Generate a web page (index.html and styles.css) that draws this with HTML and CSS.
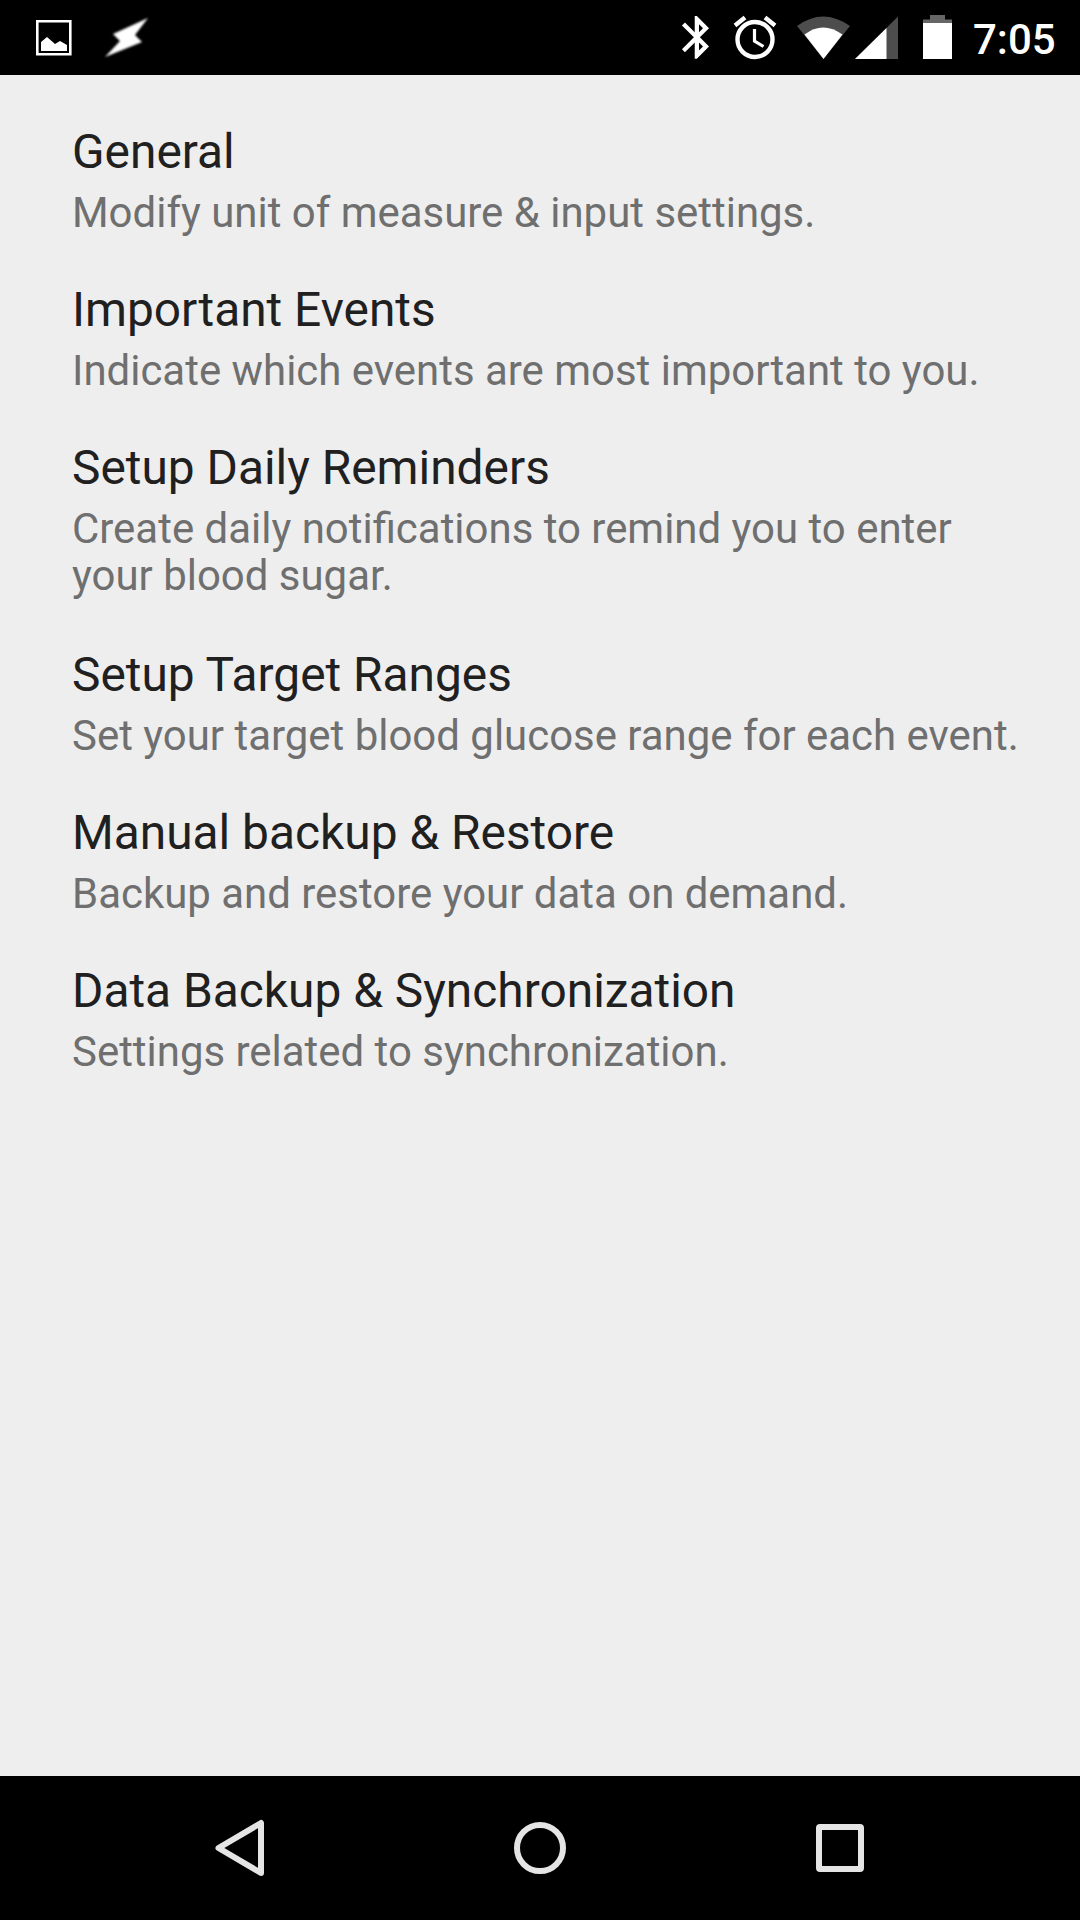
FILE: index.html
```html
<!DOCTYPE html>
<html lang="en">
<head>
<meta charset="utf-8">
<title>Settings</title>
<link rel="stylesheet" href="styles.css">
</head>
<body>
<header class="status">
  <svg class="status-left" width="160" height="75" viewBox="0 0 160 75">
    <path fill="none" stroke="#fff" stroke-width="2.600" d="M37.300 21.300h33v33h-33z"/>
    <path fill="#fff" d="M41 51V42l6-5 8 7 5-3 7 4v6z"/>
    <path class="bolt" fill="#fff" d="M148 18L113 34 120 41 105 57 142 42 135 35z"/>
  </svg>
  <svg class="status-right" width="290" height="75" viewBox="670 0 290 75">
    <path fill="#fff" transform="translate(671.300 11.800) scale(2.130)" d="M17.710 7.710L12 2h-1v7.590L6.410 5 5 6.410 10.590 12 5 17.590 6.410 19 11 14.410V22h1l5.710-5.710-4.300-4.290 4.300-4.290zM13 5.830l1.880 1.880L13 9.590V5.830zm1.880 10.460L13 18.170v-3.760l1.880 1.880z"/>
    <circle cx="755" cy="39.500" r="17.500" fill="none" stroke="#fff" stroke-width="4.400"/>
    <path fill="none" stroke="#fff" stroke-width="4.400" d="M735 25.500l10-8M775 25.500l-10-8"/>
    <path fill="none" stroke="#fff" stroke-width="3.200" d="M754.500 29v12l9 5.500"/>
    <path fill="#4d4d4d" d="M797 26Q823 7 850 26L823.500 59z"/>
    <path fill="#fff" d="M804.500 34.500Q823 20.500 842.500 34.500L823.500 59z"/>
    <path fill="#4d4d4d" d="M898 16.500V59h-43z"/><path fill="#fff" d="M886.500 28v31h-31.500z"/>
    <path fill="#666" d="M923 19.500h7v-4.500h15v4.500h7V24h-29z"/>
    <path fill="#fff" d="M923 23h29v36h-29z"/>
  </svg>
  <time class="clock">7:05</time>
</header>
<main class="settings">
  <section class="item"><h2>General</h2><p>Modify unit of measure &amp; input settings.</p></section>
  <section class="item"><h2>Important Events</h2><p>Indicate which events are most important to you.</p></section>
  <section class="item"><h2>Setup Daily Reminders</h2><p>Create daily notifications to remind you to enter<br>your blood sugar.</p></section>
  <section class="item"><h2>Setup Target Ranges</h2><p>Set your target blood glucose range for each event.</p></section>
  <section class="item"><h2>Manual backup &amp; Restore</h2><p>Backup and restore your data on demand.</p></section>
  <section class="item"><h2>Data Backup &amp; Synchronization</h2><p>Settings related to synchronization.</p></section>
</main>
<nav class="nav">
  <svg width="1080" height="144" viewBox="0 1776 1080 144" fill="none" stroke="#e5e5e5" stroke-width="6" stroke-linejoin="round">
    <path d="M261 1823v50l-42.500-25z"/><circle cx="540" cy="1848" r="23"/><rect x="819" y="1827" width="42" height="42" rx="1"/>
  </svg>
</nav>
</body>
</html>
```
FILE: styles.css
```css
* { box-sizing: border-box; }
body { margin: 0; width: 1080px; height: 1920px; display: flex; flex-direction: column; font-family: Roboto, sans-serif; background: #eee; }
.status { height: 75px; background: #000; display: flex; flex: none; }
.status-right { margin-left: 510px; }
.bolt { filter: blur(1px); }
.clock { color: #fff; font-size: 42px; font-weight: 500; line-height: 79px; margin-left: 13px; }
.settings { flex: 1; padding: 45px 0 0 72px; }
.item { padding-bottom: 42px; }
.item:nth-child(3) { padding-bottom: 44px; }
h2 { margin: 0; font-size: 47.85px; line-height: 64px; font-weight: 400; color: #202020; white-space: nowrap; }
p { margin: 5px 0 0; font-size: 41.95px; line-height: 47px; color: #6f6f6f; white-space: nowrap; }
.nav { height: 144px; background: #000; flex: none; }
svg { display: block; flex: none; }
```
